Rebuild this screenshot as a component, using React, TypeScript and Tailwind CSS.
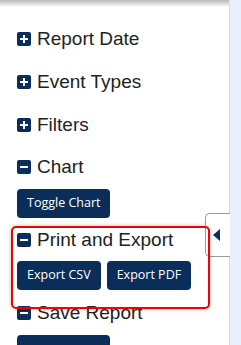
import React from "react";

const NAVY = "bg-[#0b2d59]";

function Icon({ open }: { open: boolean }) {
  return (
    <span className={`relative inline-block w-[14px] h-[14px] rounded-[2px] ${NAVY} shrink-0`}>
      <span className="absolute left-[3px] top-[6px] w-[8px] h-[2px] bg-white" />
      {!open && <span className="absolute left-[6px] top-[3px] w-[2px] h-[8px] bg-white" />}
    </span>
  );
}

function Header({ label, open }: { label: string; open: boolean }) {
  return (
    <div className="flex items-center h-[22px] gap-[6px]">
      <Icon open={open} />
      <span className="text-[19px] leading-[22px] text-[#222]">{label}</span>
    </div>
  );
}

function Btn({ children, w }: { children: React.ReactNode; w?: string }) {
  return (
    <button
      className={`h-[29px] px-[10px] rounded-[4px] ${NAVY} text-white text-[12.5px] leading-none ${w ?? ""}`}
      style={{ fontFamily: '"Open Sans", sans-serif' }}
    >
      {children}
    </button>
  );
}

export default function App() {
  return (
    <div
      className="relative w-[241px] h-[345px] overflow-hidden bg-white flex"
      style={{ fontFamily: '"Liberation Sans", Arial, sans-serif' }}
    >
      <div className="relative w-[229px] h-full pl-[17px] pt-[28px]">
        <div className="absolute left-0 top-0 w-full h-[7px] bg-gradient-to-b from-[#b8b8b8] to-white" />
        <div className="relative">
          <div className="mb-[21px]">
            <Header label="Report Date" open={false} />
          </div>
          <div className="mb-[21px]">
            <Header label="Event Types" open={false} />
          </div>
          <div className="mb-[20px]">
            <Header label="Filters" open={false} />
          </div>
          <div className="mb-[11px]">
            <Header label="Chart" open={true} />
            <div className="mt-[11px]">
              <Btn>Toggle Chart</Btn>
            </div>
          </div>
          <div className="mb-[12px]">
            <Header label="Print and Export" open={true} />
            <div className="mt-[10px] flex gap-[6px]">
              <Btn>Export CSV</Btn>
              <Btn>Export PDF</Btn>
            </div>
          </div>
          <div>
            <Header label="Save Report" open={true} />
            <div className="mt-[11px]">
              <Btn w="w-[93px] pt-[20px]">Save Report</Btn>
            </div>
          </div>
        </div>
        {/* collapse handle */}
        <div className="absolute left-[205px] top-[213px] w-[25px] h-[44px] bg-white border border-r-0 border-[#9a9a9a] rounded-l-[5px] flex items-center justify-center">
          <div className="w-0 h-0 border-t-[6px] border-b-[6px] border-r-[7px] border-t-transparent border-b-transparent border-r-[#0b2d59] ml-[-4px]" />
        </div>
        {/* highlight */}
        <div className="absolute left-[11px] top-[226px] w-[199px] h-[83px] border-2 border-[#f20000] rounded-[5px] shadow-[0_0_4px_rgba(0,0,0,0.25)]" />
      </div>
      <div className="w-[1px] h-full bg-[#d6dbe3]" />
      <div className="flex-1 h-full bg-[#e8f0fb]" />
    </div>
  );
}
